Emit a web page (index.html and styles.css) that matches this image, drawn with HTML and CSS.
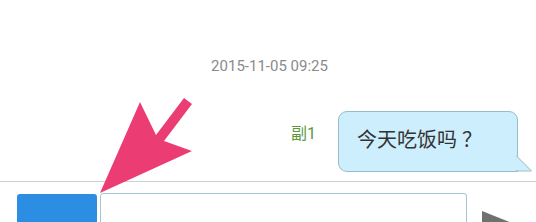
FILE: index.html
```html
<!DOCTYPE html>
<html lang="zh">
<head>
<meta charset="utf-8">
<link rel="stylesheet" href="styles.css">
</head>
<body>
<div class="screen">
  <div class="messages">
    <div class="time">2015-11-05 09:25</div>
    <div class="row">
      <div class="name">副1</div>
      <div class="bubble">今天吃饭吗<span class="q">？</span>
        <svg class="tail" width="17" height="17" viewBox="0 0 17 17">
          <polygon points="0,0 15.5,15.5 0,15.5" fill="#cdeefc"/>
          <polyline points="0,0.5 15.5,16 0,16" fill="none" stroke="#98bccb" stroke-width="1"/>
        </svg>
      </div>
    </div>
  </div>
  <div class="footer">
    <div class="btn"></div>
    <div class="input"></div>
    <svg class="send" width="40" height="12" viewBox="0 0 40 12">
      <polygon points="0,0 30,12 0,12" fill="#707070"/>
    </svg>
  </div>
  <svg class="arrow" width="536" height="222" viewBox="0 0 536 222">
    <polygon points="100,193 140,102 156,135 184,98 192,104 164,141 192,151" fill="#ec3c74"/>
  </svg>
</div>
</body>
</html>
```
FILE: styles.css
```css
html, body {
  margin: 0;
  padding: 0;
  background: #fff;
}
.screen {
  position: relative;
  width: 536px;
  height: 222px;
  overflow: hidden;
  font-family: Roboto, "Noto Sans CJK SC", sans-serif;
}
.messages {
  height: 181px;
  display: flex;
  flex-direction: column;
}
.time {
  margin-top: 57px;
  text-align: center;
  font-size: 15px;
  line-height: 18px;
  color: #8a8a8a;
  padding-left: 3px;
}
.row {
  margin-top: 36px;
  display: flex;
  justify-content: flex-end;
  align-items: flex-start;
  padding-right: 18px;
}
.name {
  margin-top: 13px;
  margin-right: 22px;
  font-size: 16px;
  line-height: 20px;
  color: #5a983c;
}
.bubble {
  position: relative;
  background: #cdeefc;
  border: 1px solid #98bccb;
  border-radius: 9px 9px 0 9px;
  padding: 15px 35px 20px 18px;
  font-size: 20px;
  line-height: 24px;
  color: #333;
  font-family: "Noto Sans CJK SC", sans-serif;
}
.q {
  margin-left: 5px;
}
.tail {
  position: absolute;
  right: -16px;
  bottom: -1px;
}
.footer {
  border-top: 1px solid #cfcfcf;
  display: flex;
  align-items: flex-start;
  padding: 11px 0 0 17px;
}
.btn {
  margin-top: 1px;
  width: 80px;
  height: 60px;
  background: #2b8ee2;
  border-radius: 3px;
}
.input {
  margin-left: 3px;
  width: 367px;
  height: 60px;
  box-sizing: border-box;
  border: 1px solid #a3c6d2;
  border-radius: 3px;
}
.send {
  margin-left: 15px;
  margin-top: 18px;
}
.arrow {
  position: absolute;
  left: 0;
  top: 0;
}
```
